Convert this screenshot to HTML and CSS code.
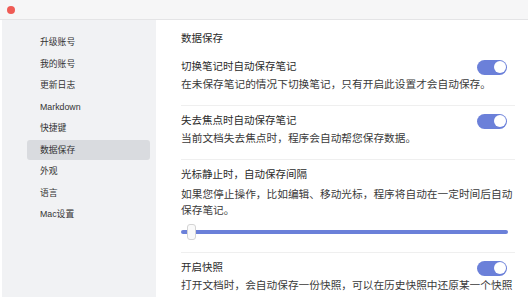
FILE: index.html
```html
<!DOCTYPE html>
<html lang="zh-CN">
<head>
  <meta charset="UTF-8">
  <meta name="viewport" content="width=device-width, initial-scale=1.0">
  <title>偏好设置</title>
  <link rel="stylesheet" href="styles.css">
</head>
<body>
  <!-- Title bar -->
  <div class="titlebar">
    <span class="dot-close"></span>
  </div>

  <div class="window">
    <!-- Sidebar -->
    <div class="sidebar">
      <div class="nav-item">升级账号</div>
      <div class="nav-item">我的账号</div>
      <div class="nav-item">更新日志</div>
      <div class="nav-item">Markdown</div>
      <div class="nav-item">快捷键</div>
      <div class="nav-item active">数据保存</div>
      <div class="nav-item">外观</div>
      <div class="nav-item">语言</div>
      <div class="nav-item">Mac设置</div>
    </div>

    <!-- Settings -->
    <div class="content">
      <h1>数据保存</h1>

      <div class="setting">
        <div class="setting-head">
          <div class="setting-title">切换笔记时自动保存笔记</div>
          <span class="toggle on"></span>
        </div>
        <div class="setting-desc">在未保存笔记的情况下切换笔记，只有开启此设置才会自动保存。</div>
      </div>

      <div class="setting">
        <div class="setting-head">
          <div class="setting-title">失去焦点时自动保存笔记</div>
          <span class="toggle on"></span>
        </div>
        <div class="setting-desc">当前文档失去焦点时，程序会自动帮您保存数据。</div>
      </div>

      <div class="setting setting-slider">
        <div class="setting-head">
          <div class="setting-title">光标静止时，自动保存间隔</div>
        </div>
        <div class="setting-desc">如果您停止操作，比如编辑、移动光标，程序将自动在一定时间后自动保存笔记。</div>
        <div class="slider">
          <div class="slider-track"></div>
          <div class="slider-thumb"></div>
        </div>
      </div>

      <div class="setting">
        <div class="setting-head">
          <div class="setting-title">开启快照</div>
          <span class="toggle on"></span>
        </div>
        <div class="setting-desc">打开文档时，会自动保存一份快照，可以在历史快照中还原某一个快照版本。</div>
      </div>
    </div>
  </div>
</body>
</html>
```

FILE: styles.css
```css
html, body {
  margin: 0;
  padding: 0;
  height: 297px;
  overflow: hidden;
}
body {
  font-family: "Liberation Sans", "Noto Sans CJK SC", sans-serif;
  background-color: #fff;
  color: #333;
}
.titlebar {
  height: 19px;
  background-color: #f6f6f7;
  border-bottom: 1px solid #e4e4e6;
  display: flex;
  align-items: center;
  padding-left: 7px;
}
.dot-close {
  width: 8px;
  height: 8px;
  border-radius: 50%;
  background-color: #ef5b55;
  margin-top: 1px;
}
.window {
  display: flex;
  height: 277px;
}
.sidebar {
  width: 154px;
  margin-left: 2px;
  background-color: #f1f2f4;
  padding: 12px 6px 0 25px;
  box-sizing: border-box;
}
.nav-item {
  height: 20px;
  line-height: 20px;
  margin-bottom: 1.5px;
  padding-left: 13px;
  font-size: 8.8px;
  color: #333;
  border-radius: 3px;
}
.nav-item.active {
  background-color: #d9dbdf;
}
.content {
  flex: 1;
  padding: 9px 13px 0 25px;
  overflow: hidden;
}
h1 {
  margin: 0 0 5px;
  font-size: 10.5px;
  line-height: 18px;
  font-weight: normal;
  color: #2b2b2b;
}
.setting {
  padding: 5px 0 12px;
  border-bottom: 1px solid #efefef;
}
.setting-head {
  display: flex;
  align-items: center;
  justify-content: space-between;
}
.setting-title {
  font-size: 10.5px;
  line-height: 18px;
  color: #2b2b2b;
}
.setting-desc {
  margin-top: 1px;
  font-size: 10.7px;
  line-height: 17px;
  color: #3a3a3a;
}
.setting-slider .setting-desc {
  margin-top: 3px;
  line-height: 16px;
}
.toggle {
  position: relative;
  width: 30px;
  height: 15px;
  margin: 2px 8px 0 0;
  border-radius: 8px;
  background-color: #d0d0d0;
}
.toggle.on {
  background-color: #6b80d9;
}
.toggle::after {
  content: "";
  position: absolute;
  top: 1.5px;
  left: 1.5px;
  width: 12px;
  height: 12px;
  border-radius: 50%;
  background-color: #fff;
}
.toggle.on::after {
  left: 16.5px;
}
.slider {
  position: relative;
  height: 16px;
  margin: 6px 7px 0 0;
  display: flex;
  align-items: center;
}
.slider-track {
  flex: 1;
  height: 4px;
  border-radius: 2px;
  background-color: #6b80d9;
}
.slider-thumb {
  position: absolute;
  left: 6px;
  top: 0;
  width: 7px;
  height: 14px;
  border: 1px solid #d4d4d4;
  border-radius: 3px;
  background-color: #fafafa;
}
```
